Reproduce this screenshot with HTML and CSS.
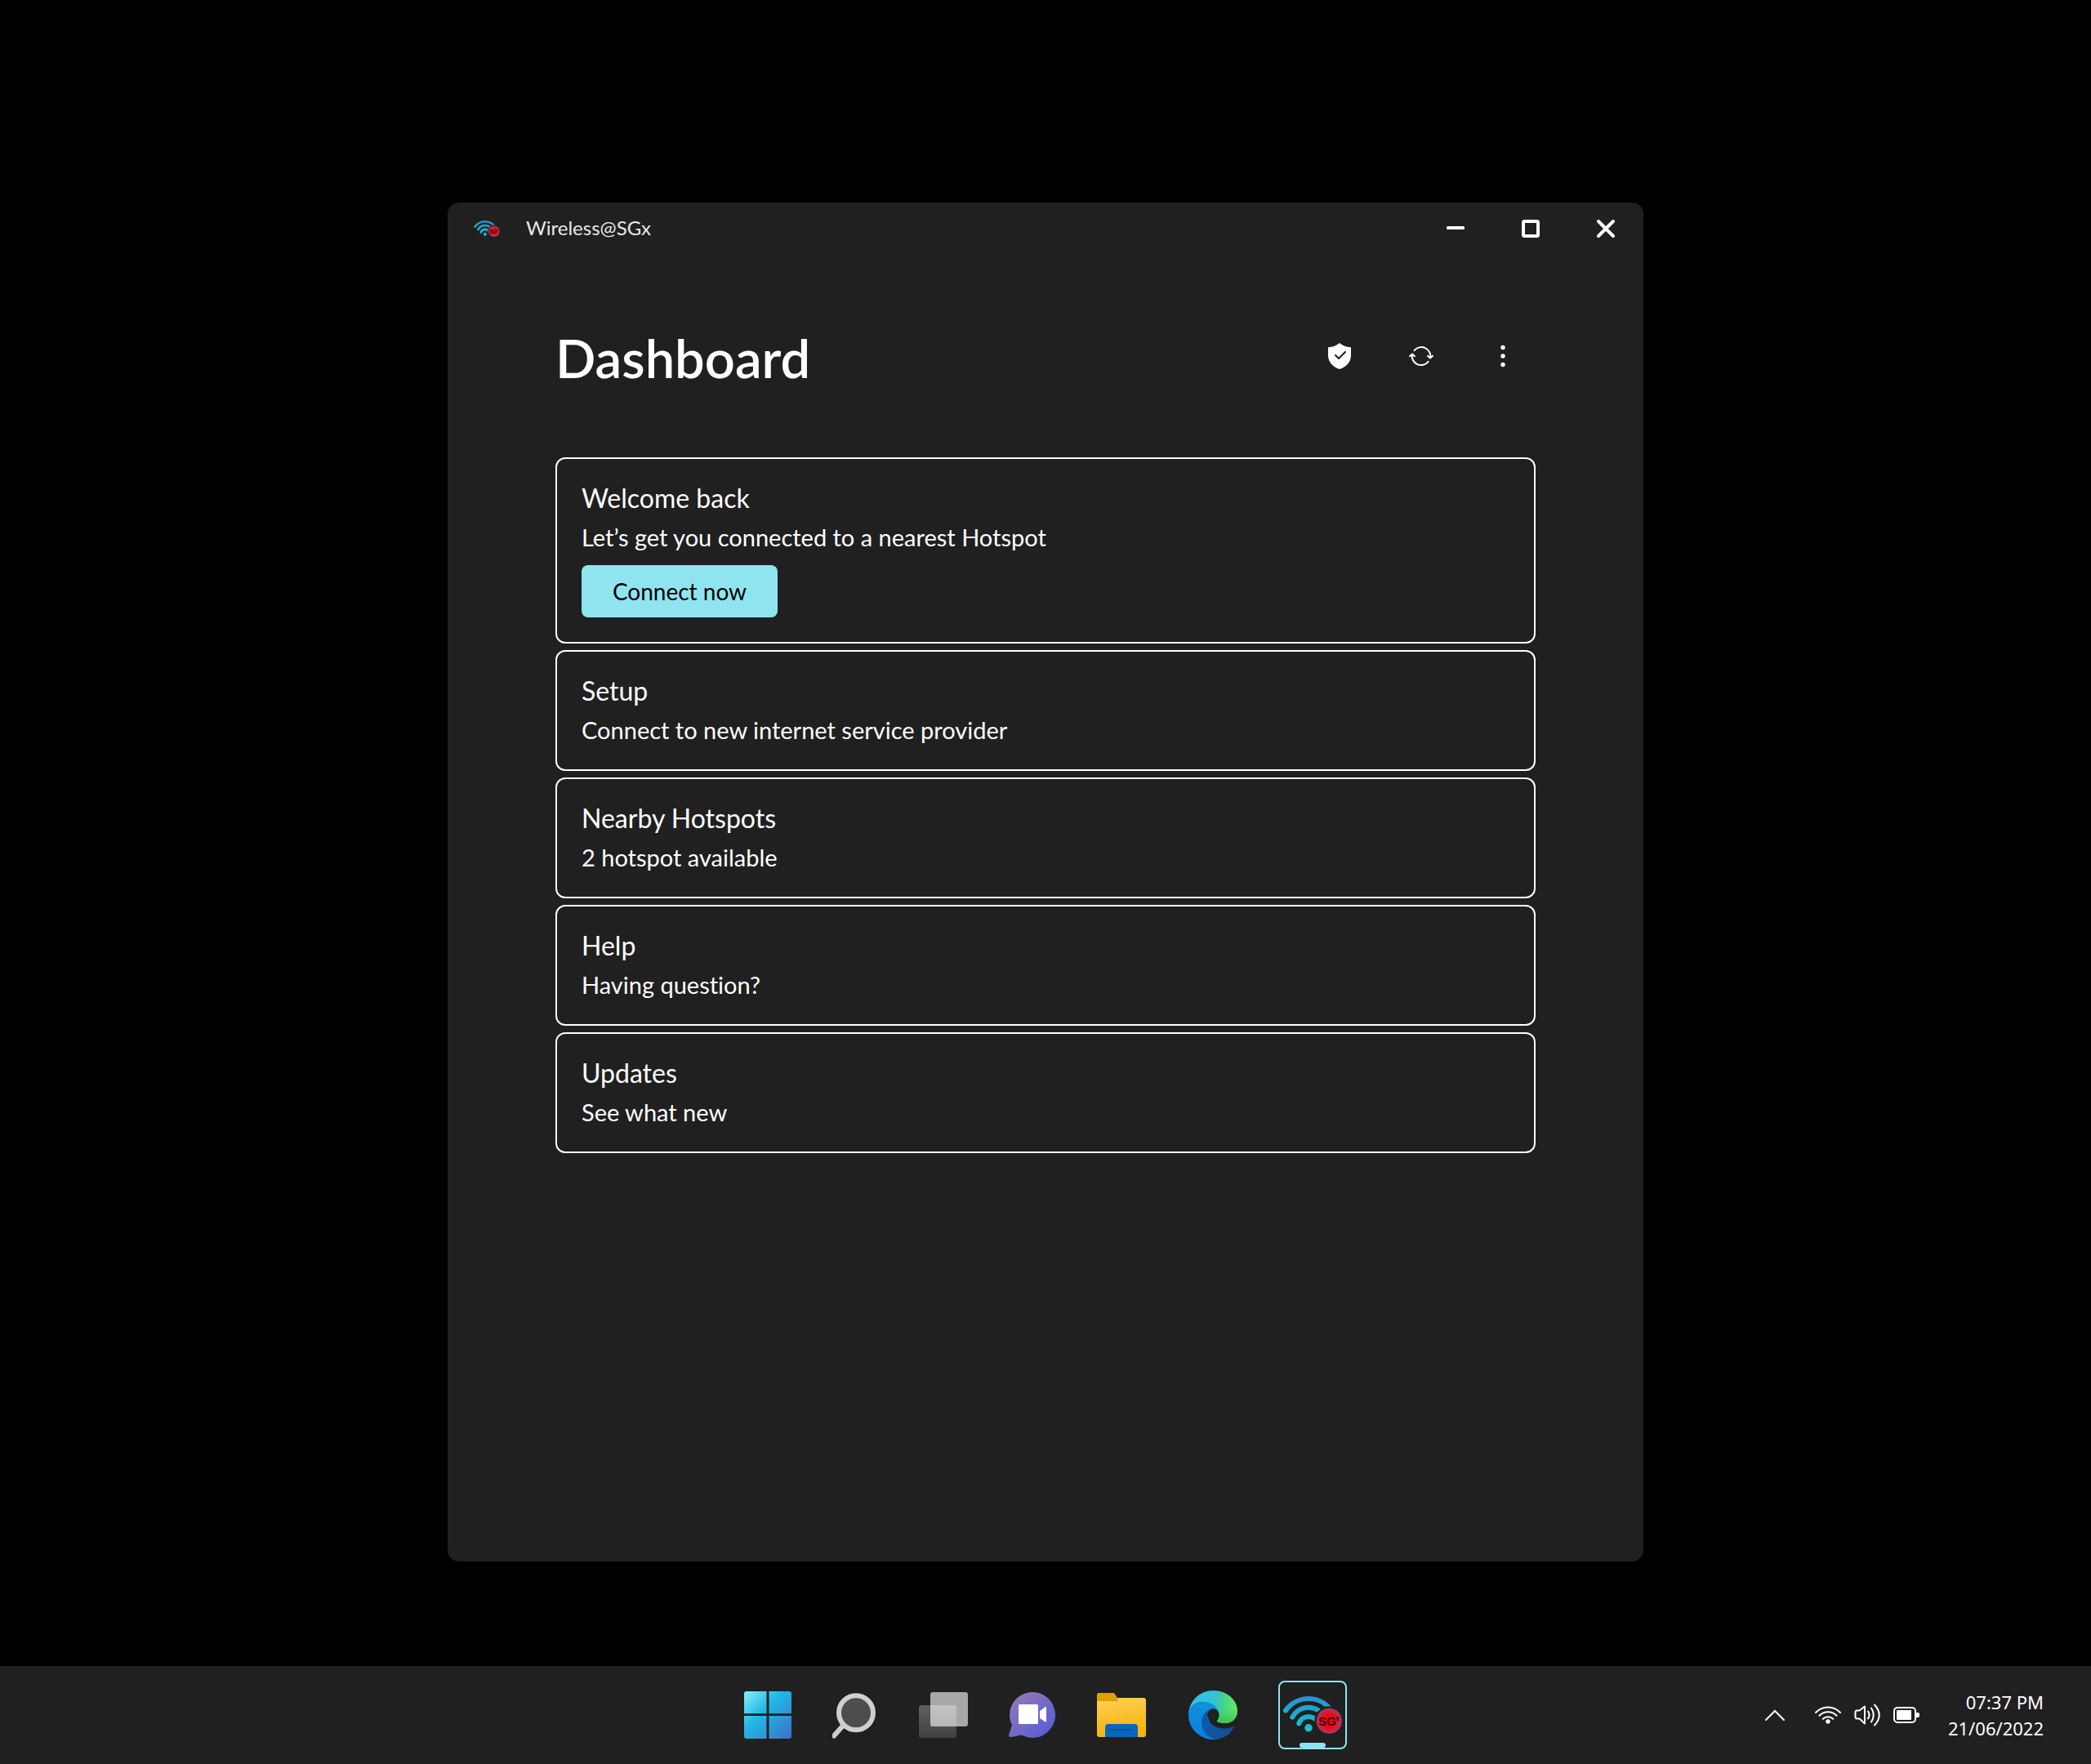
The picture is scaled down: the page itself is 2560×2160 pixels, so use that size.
FILE: index.html
```html
<!DOCTYPE html>
<html lang="en">
<head>
  <meta charset="UTF-8">
  <title>Wireless@SGx</title>
  <link rel="stylesheet" href="styles.css">
</head>
<body>
  <main class="desktop">
    <div class="window">
      <header class="titlebar">
        <svg class="titlebar-logo" viewBox="6 19 72 46">
          <defs>
            <linearGradient id="wifiFill" gradientUnits="userSpaceOnUse" x1="37" y1="19" x2="37" y2="62">
              <stop offset="0" stop-color="#2a8fd0"/>
              <stop offset="1" stop-color="#12c8cf"/>
            </linearGradient>
            <radialGradient id="badgeFill">
              <stop offset="0" stop-color="#ff0000"/>
              <stop offset="0.45" stop-color="#f2040c"/>
              <stop offset="1" stop-color="#a83a62"/>
            </radialGradient>
          </defs>
          <g fill="none" stroke="url(#wifiFill)" stroke-width="6" stroke-linecap="round">
            <path d="M9 36.5A34.3 34.3 0 0 1 65 36.5"/>
            <path d="M17.3 44.7A22.2 22.2 0 0 1 56.7 44.7"/>
            <path d="M25.3 52.3A12.4 12.4 0 0 1 48.7 52.3"/>
          </g>
          <circle cx="37" cy="57.7" r="4.7" fill="url(#wifiFill)"/>
          <circle cx="62.3" cy="49.3" r="18" fill="#202020"/>
          <circle cx="62.3" cy="49.3" r="15.6" fill="url(#badgeFill)"/>
          <text class="logo-text" x="49" y="55" font-size="15">SG</text>
          <text class="logo-text" x="70" y="49" font-size="9">x</text>
        </svg>
        <span class="titlebar-name">Wireless@SGx</span>
        <div class="window-controls">
          <button type="button" aria-label="Minimize">
            <svg width="24" height="24" viewBox="0 0 24 24"><rect x="1" y="9" width="22" height="4" rx="1.5" fill="#fff"/></svg>
          </button>
          <button type="button" aria-label="Maximize">
            <svg width="24" height="24" viewBox="0 0 24 24"><rect x="3" y="3" width="18" height="18" rx="1.5" fill="none" stroke="#fff" stroke-width="4"/></svg>
          </button>
          <button type="button" aria-label="Close">
            <svg width="24" height="24" viewBox="0 0 24 24"><path d="M3 3L21 21M21 3L3 21" stroke="#fff" stroke-width="4" stroke-linecap="round"/></svg>
          </button>
        </div>
      </header>

      <div class="content">
        <div class="page-header">
          <h1>Dashboard</h1>
          <div class="actions">
            <button type="button" aria-label="Security">
              <svg width="28" height="32" viewBox="0 0 28 32">
                <path d="M14 0C17.500 3 22 5 28 5.300V15C28 23.500 22 29.500 14 32C6 29.500 0 23.500 0 15V5.300C6 5 10.500 3 14 0Z" fill="#fff"/>
                <path d="M9 15L13 19L21 11" fill="none" stroke="#202020" stroke-width="2" stroke-linecap="round" stroke-linejoin="round"/>
              </svg>
            </button>
            <button type="button" aria-label="Refresh">
              <svg width="32" height="32" viewBox="0 0 32 32" fill="none" stroke="#fff" stroke-width="2" stroke-linecap="round" stroke-linejoin="round">
                <path d="M7.500 9.200A11.200 11.200 0 0 1 27.200 18.200M24 15.800L27 18.500L30 15.800"/>
                <path d="M24.600 22.800A11.200 11.200 0 0 1 4.800 13.800M2 16.200L5 13.500L8 16.200"/>
              </svg>
            </button>
            <button type="button" aria-label="More options">
              <svg width="6" height="28" viewBox="0 0 6 28" fill="#fff"><circle cx="3" cy="3.500" r="2.700"/><circle cx="3" cy="14" r="2.700"/><circle cx="3" cy="24.500" r="2.700"/></svg>
            </button>
          </div>
        </div>

        <div class="cards">
          <section class="card">
            <h2>Welcome back</h2>
            <p>Let’s get you connected to a nearest Hotspot</p>
            <button type="button" class="connect">Connect now</button>
          </section>
          <a class="card" href="#setup">
            <h2>Setup</h2>
            <p>Connect to new internet service provider</p>
          </a>
          <a class="card" href="#hotspots">
            <h2>Nearby Hotspots</h2>
            <p>2 hotspot available</p>
          </a>
          <a class="card" href="#help">
            <h2>Help</h2>
            <p>Having question?</p>
          </a>
          <a class="card" href="#updates">
            <h2>Updates</h2>
            <p>See what new</p>
          </a>
        </div>
      </div>
    </div>
  </main>

  <footer class="taskbar">
    <nav class="apps">
      <button type="button" aria-label="Start">
        <svg width="58" height="58" viewBox="0 0 58 58">
          <defs>
            <linearGradient id="startFill" gradientUnits="userSpaceOnUse" x1="0" y1="0" x2="58" y2="58">
              <stop offset="0" stop-color="#86f0fb"/>
              <stop offset="0.4" stop-color="#22b8e8"/>
              <stop offset="1" stop-color="#3d70c6"/>
            </linearGradient>
          </defs>
          <path d="M3 0H27.500V27.300H0V3A3 3 0 0 1 3 0ZM30.500 0H55A3 3 0 0 1 58 3V27.300H30.500ZM0 30H27.500V58H3A3 3 0 0 1 0 55ZM30.500 30H58V55A3 3 0 0 1 55 58H30.500Z" fill="url(#startFill)"/>
        </svg>
      </button>
      <button type="button" aria-label="Search">
        <svg width="56" height="58" viewBox="0 0 56 58">
          <path d="M14 41L2 54.500" stroke="#cfcfcf" stroke-width="6" stroke-linecap="round"/>
          <circle cx="29" cy="26.300" r="21" fill="#4d4d4d" stroke="#cfcfcf" stroke-width="6"/>
        </svg>
      </button>
      <button type="button" aria-label="Task view">
        <svg width="60" height="58" viewBox="0 0 60 58">
          <defs>
            <linearGradient id="backFill" x1="0" y1="0" x2="0" y2="1">
              <stop offset="0" stop-color="#606060"/>
              <stop offset="1" stop-color="#414141"/>
            </linearGradient>
            <linearGradient id="overlapFill" x1="0" y1="0" x2="0" y2="1">
              <stop offset="0" stop-color="#c4c4c4"/>
              <stop offset="1" stop-color="#b6b6b6"/>
            </linearGradient>
          </defs>
          <rect x="0" y="17" width="46" height="40" rx="3" fill="url(#backFill)"/>
          <rect x="14" y="1" width="46" height="42" rx="3" fill="#a8a8a8"/>
          <path d="M14 17H43A3 3 0 0 1 46 20V43H17A3 3 0 0 1 14 40Z" fill="url(#overlapFill)"/>
        </svg>
      </button>
      <button type="button" aria-label="Chat">
        <svg width="58" height="58" viewBox="0 0 58 58">
          <defs>
            <linearGradient id="chatFill" gradientUnits="userSpaceOnUse" x1="8" y1="8" x2="46" y2="52">
              <stop offset="0" stop-color="#9175bb"/>
              <stop offset="1" stop-color="#5860cf"/>
            </linearGradient>
          </defs>
          <path d="M29 1A28 28 0 1 1 15.700 53.600L3 56Q-0.500 56 0.200 53L4 41.500A28 28 0 0 1 29 1Z" fill="url(#chatFill)"/>
          <rect x="12" y="16" width="24" height="24" rx="1.500" fill="#fff"/>
          <path d="M38 24L45 19Q46 18.600 46 19.600V37Q46 38 45 37.500L38 33Z" fill="#fff"/>
        </svg>
      </button>
      <button type="button" aria-label="File Explorer">
        <svg width="60" height="58" viewBox="0 0 60 58">
          <defs>
            <linearGradient id="folderFill" x1="0" y1="0" x2="0.200" y2="1">
              <stop offset="0" stop-color="#ffd055"/>
              <stop offset="1" stop-color="#f6b40c"/>
            </linearGradient>
          </defs>
          <rect x="0" y="8" width="60" height="48" rx="3" fill="url(#folderFill)"/>
          <path d="M2 2H20Q21.500 2 22.200 3.500L25.500 9.500V12H0V4Q0 2 2 2Z" fill="#e0a100"/>
          <path d="M10 56V44A4 4 0 0 1 14 40H46A4 4 0 0 1 50 44V56Z" fill="#0568be"/>
          <rect x="16" y="46" width="28" height="2" rx="1" fill="#15508f"/>
        </svg>
      </button>
      <button type="button" aria-label="Edge">
        <svg width="62" height="60" viewBox="-2 0 62 60">
          <defs>
            <linearGradient id="edgeTop" gradientUnits="userSpaceOnUse" x1="4" y1="20" x2="60" y2="26">
              <stop offset="0" stop-color="#35bdf0"/>
              <stop offset="0.500" stop-color="#30c4d4"/>
              <stop offset="0.700" stop-color="#48d684"/>
              <stop offset="1" stop-color="#66ea68"/>
            </linearGradient>
            <linearGradient id="edgeLip" gradientUnits="userSpaceOnUse" x1="46" y1="22" x2="46" y2="40">
              <stop offset="0" stop-color="#3cc64e" stop-opacity="0"/>
              <stop offset="1" stop-color="#3cc64e"/>
            </linearGradient>
            <linearGradient id="edgeLeft" gradientUnits="userSpaceOnUse" x1="20" y1="14" x2="16" y2="60">
              <stop offset="0" stop-color="#1290dc"/>
              <stop offset="1" stop-color="#0880dc"/>
            </linearGradient>
            <linearGradient id="edgeDark" gradientUnits="userSpaceOnUse" x1="16" y1="40" x2="54" y2="50">
              <stop offset="0" stop-color="#0c5aa6"/>
              <stop offset="1" stop-color="#174f94"/>
            </linearGradient>
          </defs>
          <path d="M0 30A30 30 0 0 1 30 0C48 0 60 12 60 25C60 34 53.500 40 45 40C39 40 34.500 38.600 35 37C37.400 34.500 38 31 37.400 28C36 20 26 14 17 14C8 14 1 20 0 30Z" fill="url(#edgeTop)"/>
          <path d="M60 25C60 34 53.500 40 45 40C39 40 34.500 38.600 35 37C37.400 34.500 38 31 37.400 28L40 18H58Z" fill="url(#edgeLip)"/>
          <path d="M0 30C0 20 8 14 18 14C28 14 36 20 37.400 28C36 24 33 22.300 30 22.300C26 22.300 23 26 23 31L34 59.700A30 30 0 0 1 0 30Z" fill="url(#edgeLeft)"/>
          <path d="M28 22.500C20 25 16 31 16 39C16 49 23 58.500 34 59.700C43 59 51 54 55.600 45.300C56 44.400 55.400 44 54.500 44.300C50 46.500 45 47 40 46.300C30 44.500 23 38 23 31C23 27 25 23.500 28 22.500Z" fill="url(#edgeDark)"/>
        </svg>
      </button>
      <button type="button" class="app-active" aria-label="Wireless@SGx">
        <svg class="app-logo" viewBox="6 19 72 46">
          <g fill="none" stroke="url(#wifiFill)" stroke-width="6" stroke-linecap="round">
            <path d="M9 36.5A34.3 34.3 0 0 1 65 36.5"/>
            <path d="M17.3 44.7A22.2 22.2 0 0 1 56.7 44.7"/>
            <path d="M25.3 52.3A12.4 12.4 0 0 1 48.7 52.3"/>
          </g>
          <circle cx="37" cy="57.7" r="4.7" fill="url(#wifiFill)"/>
          <circle cx="62.3" cy="49.3" r="18" fill="#202020"/>
          <circle cx="62.3" cy="49.3" r="15.6" fill="url(#badgeFill)"/>
          <text class="logo-text" x="49" y="55" font-size="15">SG</text>
          <text class="logo-text" x="70" y="49" font-size="9">x</text>
        </svg>
      </button>
    </nav>

    <div class="tray">
      <button type="button" class="tray-more" aria-label="Show hidden icons">
        <svg width="26" height="16" viewBox="0 0 26 16"><path d="M2 14L13 3L24 14" fill="none" stroke="#fff" stroke-width="2" stroke-linecap="round"/></svg>
      </button>
      <button type="button" class="tray-status" aria-label="Network, volume and battery">
        <svg width="32" height="28" viewBox="0 0 32 28" fill="none" stroke="#fff" stroke-width="2" stroke-linecap="round">
          <path d="M1 11A20.500 20.500 0 0 1 31 11M5.500 14.800A14.500 14.500 0 0 1 26.500 14.800M9.800 18.800A8.600 8.600 0 0 1 22.200 18.800"/>
          <circle cx="16" cy="22" r="2.700" fill="#fff" stroke="none"/>
        </svg>
        <svg width="32" height="28" viewBox="0 0 32 28" fill="none" stroke="#fff" stroke-width="2" stroke-linecap="round" stroke-linejoin="round">
          <path d="M1.500 10.500Q1.500 8.500 3.500 8.500H6.500L13 3.500V24.500L6.500 18.500H3.500Q1.500 18.500 1.500 16.500Z"/>
          <path d="M17 9.500Q20 14 17 18.500M21 5.500Q26.500 14 21 22.500M25 1.500Q36.500 14 25 26.500"/>
        </svg>
        <svg width="32" height="28" viewBox="0 0 32 28">
          <rect x="1" y="5" width="26" height="18" rx="4" fill="none" stroke="#fff" stroke-width="2"/>
          <rect x="4" y="8" width="18" height="12" rx="1" fill="#fff"/>
          <path d="M28 11H30Q32 11 32 13V15Q32 17 30 17H28Z" fill="#fff"/>
        </svg>
      </button>
      <div class="clock">
        <time datetime="19:37">07:37 PM</time>
        <time datetime="2022-06-21">21/06/2022</time>
      </div>
    </div>
  </footer>
</body>
</html>
```
FILE: styles.css
```css
* {
  box-sizing: border-box;
}

body {
  margin: 0;
  min-height: 100vh;
  display: flex;
  flex-direction: column;
  background: #000;
  color: #fff;
  font-family: Lato, "Noto Sans", sans-serif;
  font-variant-ligatures: none;
}

button {
  padding: 0;
  border: none;
  background: none;
  color: inherit;
  font-family: inherit;
  cursor: pointer;
}

svg {
  display: block;
}

.logo-text {
  font-family: "Liberation Sans", sans-serif;
  font-weight: bold;
  fill: #33101a;
}

.desktop {
  flex: 1;
  display: flex;
  justify-content: center;
  padding: 248px 24px 128px;
}

.window {
  width: 100%;
  max-width: 1464px;
  background: #202020;
  border-radius: 14px;
  overflow: hidden;
}

.titlebar {
  display: flex;
  align-items: center;
  height: 64px;
  padding-left: 32px;
}

.titlebar-logo {
  width: 32px;
  height: 20px;
}

.titlebar-name {
  flex: 1;
  margin-left: 32px;
  font-size: 24px;
  line-height: 28px;
  padding-bottom: 2px;
  color: #e8e8e8;
}

.window-controls {
  display: flex;
}

.window-controls button {
  width: 92px;
  height: 64px;
  display: flex;
  align-items: center;
  justify-content: center;
}

.content {
  padding: 84px 132px;
}

.page-header {
  display: flex;
  align-items: center;
  justify-content: space-between;
  height: 80px;
  margin-bottom: 84px;
}

h1 {
  margin: 0;
  padding-top: 4px;
  font-size: 65px;
  line-height: 80px;
  font-weight: 600;
}

.actions {
  display: flex;
  gap: 20px;
}

.actions button {
  width: 80px;
  height: 80px;
  display: flex;
  align-items: center;
  justify-content: center;
}

.cards {
  display: flex;
  flex-direction: column;
  gap: 8px;
}

.card {
  display: block;
  padding: 30px;
  border: 2px solid #fff;
  border-radius: 12px;
  color: #fff;
  text-decoration: none;
}

.card h2 {
  margin: 0 0 12px;
  font-size: 32px;
  line-height: 36px;
  font-weight: normal;
}

.card p {
  margin: 0;
  font-size: 29px;
  line-height: 36px;
}

.connect {
  display: block;
  width: 240px;
  height: 64px;
  margin-top: 16px;
  border-radius: 8px;
  background: #8fe4f0;
  color: #000;
  font-size: 28px;
}

.taskbar {
  display: grid;
  grid-template-columns: 1fr auto 1fr;
  align-items: center;
  height: 120px;
  background: #202020;
}

.apps {
  grid-column: 2;
  display: flex;
  align-items: center;
  gap: 50px;
}

.app-active {
  position: relative;
  display: flex;
  align-items: center;
  justify-content: center;
  width: 84px;
  height: 84px;
  border: 2px solid #8fe4f0;
  border-radius: 8px;
}

.app-active::after {
  content: "";
  position: absolute;
  left: 24px;
  bottom: 0;
  width: 32px;
  height: 6px;
  border-radius: 3px;
  background: #8fe4f0;
}

.app-logo {
  width: 72px;
  height: 46px;
}

.tray {
  display: flex;
  align-items: center;
  justify-content: flex-end;
  padding-right: 58px;
}

.tray-more {
  margin-right: 36px;
}

.tray-status {
  display: flex;
  gap: 16px;
  margin-right: 35px;
}

.clock {
  display: flex;
  flex-direction: column;
  font-family: "Noto Sans", sans-serif;
  font-size: 22px;
  line-height: 32px;
  text-align: right;
}
```
